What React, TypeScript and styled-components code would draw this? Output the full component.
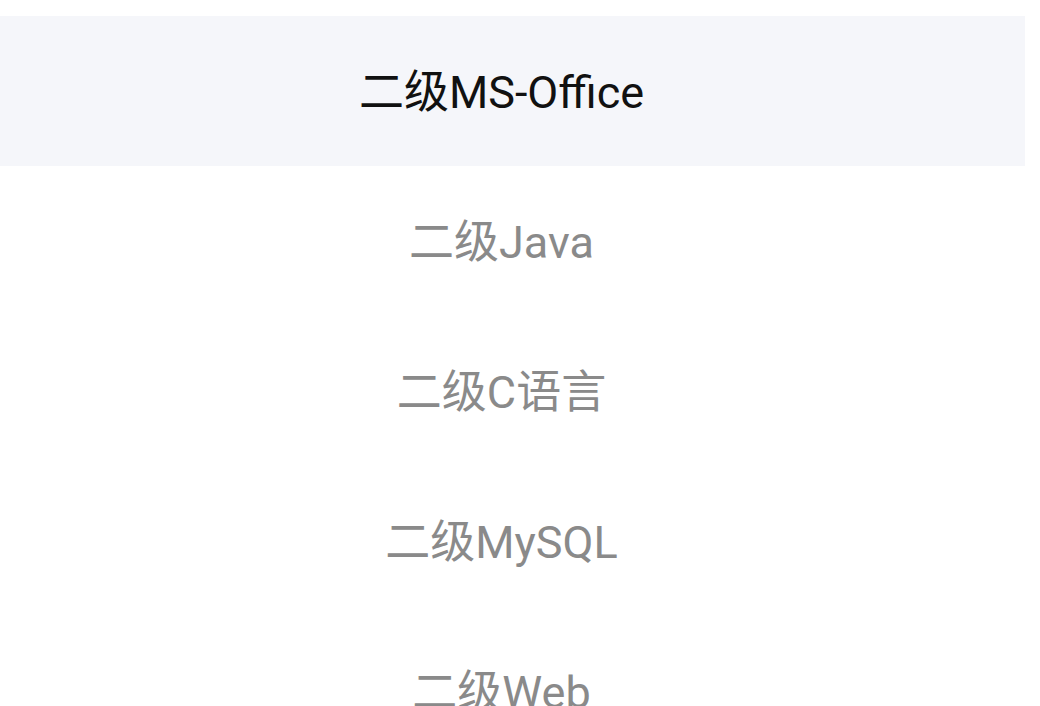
import React from "react";
import styled, { createGlobalStyle } from "styled-components";

const Global = createGlobalStyle`
  html, body { margin: 0; padding: 0; background: #ffffff; }
  body { font-family: Roboto, "Noto Sans CJK SC", sans-serif; overflow: hidden; }
`;

const Page = styled.div`
  width: 1040px;
  height: 706px;
  overflow: hidden;
  padding-top: 16px;
  box-sizing: border-box;
  background: #ffffff;
`;

const List = styled.ul`
  list-style: none;
  margin: 0;
  padding: 0;
  width: 1025px;
  display: flex;
  flex-direction: column;
`;

const Item = styled.li<{ $active?: boolean }>`
  height: 150px;
  flex: 0 0 150px;
  display: flex;
  align-items: center;
  justify-content: center;
  padding-right: 22px;
  padding-top: 2px;
  box-sizing: border-box;
  background: ${(p) => (p.$active ? "#f5f6fa" : "#ffffff")};
  color: ${(p) => (p.$active ? "#111111" : "#8a8a8a")};
  font-family: Roboto, "Noto Sans CJK SC", sans-serif;
  font-size: 45px;
  line-height: 1;
`;

const items = ["二级MS-Office", "二级Java", "二级C语言", "二级MySQL", "二级Web"];

export default function App() {
  return (
    <Page>
      <Global />
      <List>
        {items.map((t, i) => (
          <Item key={t} $active={i === 0}>
            {t}
          </Item>
        ))}
      </List>
    </Page>
  );
}
